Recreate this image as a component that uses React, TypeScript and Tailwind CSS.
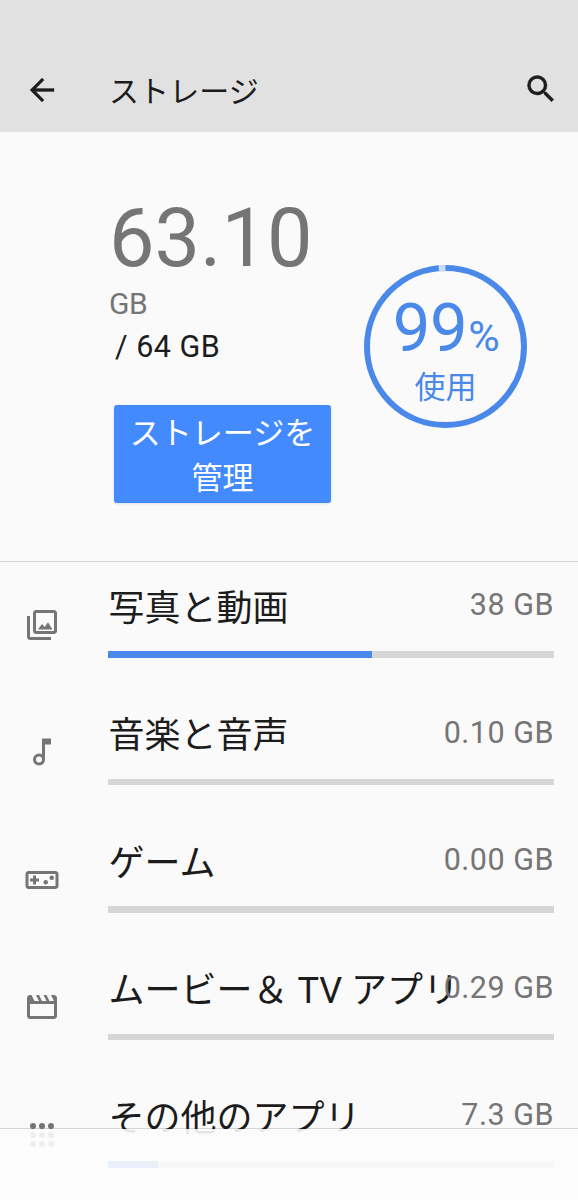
import type { ReactNode } from 'react';

interface StorageItem {
    label: string;
    size: string;
    percent: number;
    icon: ReactNode;
}

const photoIcon = (
    <>
        <path d="M20 2H8c-1.1 0-2 .9-2 2v12c0 1.1.9 2 2 2h12c1.1 0 2-.9 2-2V4c0-1.1-.9-2-2-2zm0 14H8V4h12v12z" />
        <path d="M4 6H2v14c0 1.1.9 2 2 2h14v-2H4V6z" />
        <path d="M9.3 15l2.7-3.7 1.8 2 2.2-3.1 3 4.8z" />
    </>
);

const musicIcon = (
    <path d="M12 3l.01 10.55c-.59-.34-1.27-.55-2-.55a4 4 0 1 0 0 8c2.22 0 3.99-1.79 3.99-4V7h4V3h-6zm-1.99 16a2 2 0 1 1 0-4 2 2 0 0 1 0 4z" />
);

const gameIcon = (
    <>
        <path d="M21 6H3c-1.1 0-2 .9-2 2v8c0 1.1.9 2 2 2h18c1.1 0 2-.9 2-2V8c0-1.1-.9-2-2-2zm0 10H3V8h18v8z" />
        <path d="M6 15h2v-2h2v-2H8V9H6v2H4v2h2z" />
        <circle cx="14.5" cy="13.5" r="1.5" />
        <circle cx="18.5" cy="10.5" r="1.5" />
    </>
);

const movieIcon = (
    <path d="M18 4l2 4h-3l-2-4h-2l2 4h-3l-2-4H8l2 4H7L5 4H4c-1.1 0-1.99.9-1.99 2L2 18c0 1.1.9 2 2 2h16c1.1 0 2-.9 2-2V6c0-1.1-.9-2-2-2h-2zm2 14H4v-8h16v8z" />
);

const appsIcon = (
    <>
        {[6, 12, 18].map((y) =>
            [6, 12, 18].map((x) => <circle key={`${x}-${y}`} cx={x} cy={y} r="2" />)
        )}
    </>
);

const items: StorageItem[] = [
    { label: '写真と動画', size: '38 GB', percent: 59.2, icon: photoIcon },
    { label: '音楽と音声', size: '0.10 GB', percent: 0, icon: musicIcon },
    { label: 'ゲーム', size: '0.00 GB', percent: 0, icon: gameIcon },
    { label: 'ムービー＆ TV アプリ', size: '0.29 GB', percent: 0, icon: movieIcon },
    { label: 'その他のアプリ', size: '7.3 GB', percent: 11.2, icon: appsIcon },
];

function Header() {
    return (
        <header className="flex h-[132px] items-end bg-[#e1e1e1] px-6 pb-6 text-[#1c1c1c]">
            <svg viewBox="0 0 24 24" className="h-9 w-9 fill-current stroke-current stroke-[0.2]">
                <path d="M20 11H7.83l5.59-5.59L12 4l-8 8 8 8 1.41-1.41L7.83 13H20v-2z" />
            </svg>
            <h1 className="mb-[-2px] ml-[49px] flex-1 text-[30px] leading-9 tracking-[0.1px]">ストレージ</h1>
            <svg viewBox="0 0 24 24" className="mr-[-5px] mb-[1px] h-9 w-9 fill-current stroke-current stroke-[0.3]">
                <path d="M15.5 14h-.79l-.28-.27A6.471 6.471 0 0 0 16 9.5 6.5 6.5 0 1 0 9.5 16c1.61 0 3.09-.59 4.23-1.57l.27.28v.79l5 4.99L20.49 19l-4.99-5zm-6 0C7.01 14 5 11.99 5 9.5S7.01 5 9.5 5 14 7.01 14 9.5 11.99 14 9.5 14z" />
            </svg>
        </header>
    );
}

function UsageRing() {
    return (
        <div className="mt-[132.5px] ml-8 grid h-[163px] w-[163px] place-items-center text-[#4a88ea]">
            <svg viewBox="0 0 163 163" className="col-start-1 row-start-1 h-full w-full">
                <circle cx="81.5" cy="81.5" r="78.5" fill="none" stroke="currentColor" strokeWidth="6" />
                <path d="M74.7 3.3A78.5 78.5 0 0 1 81.5 3" fill="none" stroke="#c5d9f8" strokeWidth="6.4" />
            </svg>
            <div className="col-start-1 row-start-1 flex flex-col items-center pt-2.5">
                <div className="flex items-baseline pl-[1px] text-[67px] leading-[68px] tracking-[-0.5px]">
                    99<span className="ml-[1px] text-[43px]">%</span>
                </div>
                <div className="mt-[-3px] text-[31px] leading-[42px]">使用</div>
            </div>
        </div>
    );
}

function Summary() {
    return (
        <section className="flex h-[430px] border-b border-[#d4d4d4] pl-[109px]">
            <div className="w-[223px] pt-[63px]">
                <div className="text-[81px] leading-[88px] text-[#757575]">63.10</div>
                <div className="text-[30px] leading-[42px] tracking-[-0.4px] text-[#757575]">GB</div>
                <div className="pt-[1px] pl-1.5 text-[30.5px] leading-[42px] tracking-[0.5px] text-[#1c1c1c]">/ 64 GB</div>
                <button className="mt-[37px] ml-[5px] h-[98px] w-[217px] rounded-[3px] bg-[#448aff] pt-1 text-[31px] leading-[45px] text-white shadow-sm">
                    ストレージを
                    <br />
                    管理
                </button>
            </div>
            <UsageRing />
        </section>
    );
}

function StorageRow({ label, size, percent, icon }: StorageItem) {
    return (
        <li className="flex h-[127.5px] pr-6 pl-6">
            <svg viewBox="0 0 24 24" className="mt-[44.5px] h-9 w-9 shrink-0 fill-[#757575]">
                {icon}
            </svg>
            <div className="ml-12 flex-1 pt-[18px]">
                {/* Long labels run over the size */}
                <div className="flex h-[71px] justify-between">
                    <span className="ml-[0.5px] w-0 pt-[2.5px] text-[36px] leading-[52px] whitespace-nowrap text-[#1c1c1c]">{label}</span>
                    <span className="text-[30.5px] leading-[50px] tracking-[0.5px] whitespace-nowrap text-[#757575]">{size}</span>
                </div>
                <div className="h-[6.5px] bg-[#d6d6d6]">
                    <div className="h-full bg-[#4a88ea]" style={{ width: `${percent}%` }} />
                </div>
            </div>
        </li>
    );
}

export default function App() {
    return (
        <div className="relative h-[1200px] w-[578px] overflow-hidden bg-[#fafafa] font-[Roboto,'Noto_Sans_CJK_JP',sans-serif]">
            <Header />
            <Summary />
            <ul>
                {items.map((item) => (
                    <StorageRow key={item.label} {...item} />
                ))}
            </ul>

            {/* Translucent navigation bar */}
            <div className="absolute inset-x-0 bottom-0 h-[72px] border-t border-black/15 bg-[#fcfcfc]/90 bg-clip-padding" />
        </div>
    );
}
